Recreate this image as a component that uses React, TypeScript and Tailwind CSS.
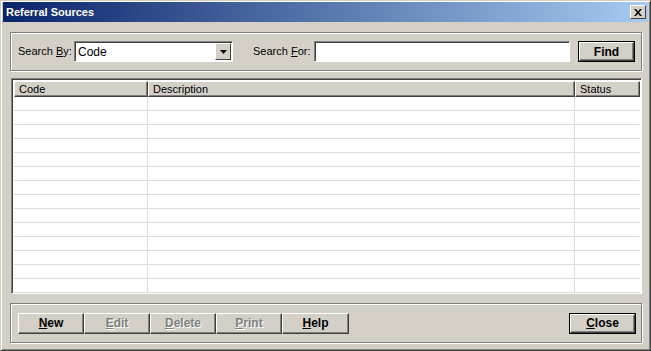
import React from 'react';

const font = { fontFamily: 'Tahoma, "Liberation Sans", "DejaVu Sans", sans-serif' };

function U({ c }: { c: string }) {
    return <span className="underline underline-offset-[1px]">{c}</span>;
}

function Btn({ label, u, disabled, def, w }: { label: string; u: number; disabled?: boolean; def?: boolean; w: string }) {
    const text = (
        <span className={disabled ? 'text-[#808080] [text-shadow:1px_1px_0_#fff]' : 'text-black'}>
            {label.slice(0, u)}<U c={label[u]} />{label.slice(u + 1)}
        </span>
    );
    return (
        <div className={`${w} shrink-0 h-[21px] ${def ? 'border border-black' : ''} flex`}>
            <div className="flex-1 flex items-center justify-center bg-[#d4d0c8] border border-t-white border-l-white border-b-[#404040] border-r-[#404040] shadow-[inset_-1px_-1px_0_#808080] text-[12px] font-bold">
                {text}
            </div>
        </div>
    );
}

export default function App() {
    const rows = Array.from({ length: 14 });
    return (
        <div className="w-[651px] h-[351px] bg-[#d4d0c8] flex flex-col border border-t-[#d4d0c8] border-l-[#d4d0c8] border-b-[#404040] border-r-[#404040] shadow-[inset_1px_1px_0_#fff,inset_-1px_-1px_0_#808080] overflow-hidden text-[11px]" style={font}>
            {/* Title bar */}
            <div className="mx-[2px] mt-[1px] h-[20px] flex items-center justify-between pl-[3px] pr-[2px] bg-[linear-gradient(to_right,#0a246a,#a6caf0)]">
                <span className="text-white font-bold text-[11px]">Referral Sources</span>
                <div className="w-[16px] h-[14px] bg-[#d4d0c8] border border-t-white border-l-white border-b-[#404040] border-r-[#404040] flex items-center justify-center">
                    <svg width="8" height="7" viewBox="0 0 8 7">
                        <path d="M0 0h2l2 2.5L6 0h2L5 3.5 8 7H6L4 4.5 2 7H0l3-3.5z" fill="#000" />
                    </svg>
                </div>
            </div>

            {/* Search group */}
            <div className="ml-[9px] mr-[8px] mt-[10px] h-[39px] border border-[#808080] shadow-[inset_1px_1px_0_#fff,1px_1px_0_#fff] flex items-center pl-[7px] pr-[5px] whitespace-nowrap">
                <span className="w-[52px] shrink-0 text-black">Search <U c="B" />y:</span>
                <div className="ml-[4px] w-[159px] shrink-0 h-[21px] bg-white border border-t-[#808080] border-l-[#808080] border-b-white border-r-white shadow-[inset_1px_1px_0_#404040] flex items-center">
                    <span className="flex-1 pl-[3px] text-black text-[12px]">Code</span>
                    <div className="w-[16px] h-[17px] mr-[1px] bg-[#d4d0c8] border border-t-white border-l-white border-b-[#404040] border-r-[#404040] flex items-center justify-center">
                        <svg width="7" height="4" viewBox="0 0 7 4"><path d="M0 0h7L3.5 4z" fill="#000" /></svg>
                    </div>
                </div>
                <span className="ml-[20px] w-[57px] shrink-0 text-black">Search <U c="F" />or:</span>
                <div className="ml-[4px] w-[256px] shrink-0 h-[21px] bg-white border border-t-[#808080] border-l-[#808080] border-b-white border-r-white shadow-[inset_1px_1px_0_#404040]" />
                <div className="ml-[8px]">
                    <Btn label="Find" u={99} w="w-[57px]" def />
                </div>
            </div>

            {/* Grid */}
            <div className="ml-[10px] mr-[8px] mt-[7px] h-[216px] bg-white border border-t-[#808080] border-l-[#808080] border-b-white border-r-white shadow-[inset_1px_1px_0_#404040] p-[1px] pl-[2px] pt-[2px] flex flex-col overflow-hidden">
                <div className="flex h-[16px] shrink-0">
                    {[['Code', 'w-[134px]'], ['Description', 'w-[427px]'], ['Status', 'flex-1']].map(([t, w]) => (
                        <div key={t} className={`${w} bg-[#d4d0c8] border border-t-white border-l-white border-b-[#404040] border-r-[#404040] shadow-[inset_-1px_-1px_0_#808080] pl-[4px] flex items-center text-black`}>{t}</div>
                    ))}
                </div>
                {rows.map((_, i) => (
                    <div key={i} className="flex h-[14px] shrink-0 border-b border-[#dcdcdc]">
                        <div className="w-[134px] border-r border-[#dcdcdc]" />
                        <div className="w-[427px] border-r border-[#dcdcdc]" />
                        <div className="flex-1" />
                    </div>
                ))}
            </div>

            {/* Button group */}
            <div className="ml-[9px] mr-[8px] mt-[9px] h-[40px] border border-[#808080] shadow-[inset_1px_1px_0_#fff,1px_1px_0_#fff] flex items-center pl-[7px] pr-[5px]">
                <Btn label="New" u={0} w="w-[66px]" />
                <Btn label="Edit" u={0} w="w-[66px]" disabled />
                <Btn label="Delete" u={0} w="w-[66px]" disabled />
                <Btn label="Print" u={0} w="w-[66px]" disabled />
                <Btn label="Help" u={0} w="w-[67px]" />
                <div className="flex-1" />
                <Btn label="Close" u={0} w="w-[67px]" def />
            </div>
        </div>
    );
}
